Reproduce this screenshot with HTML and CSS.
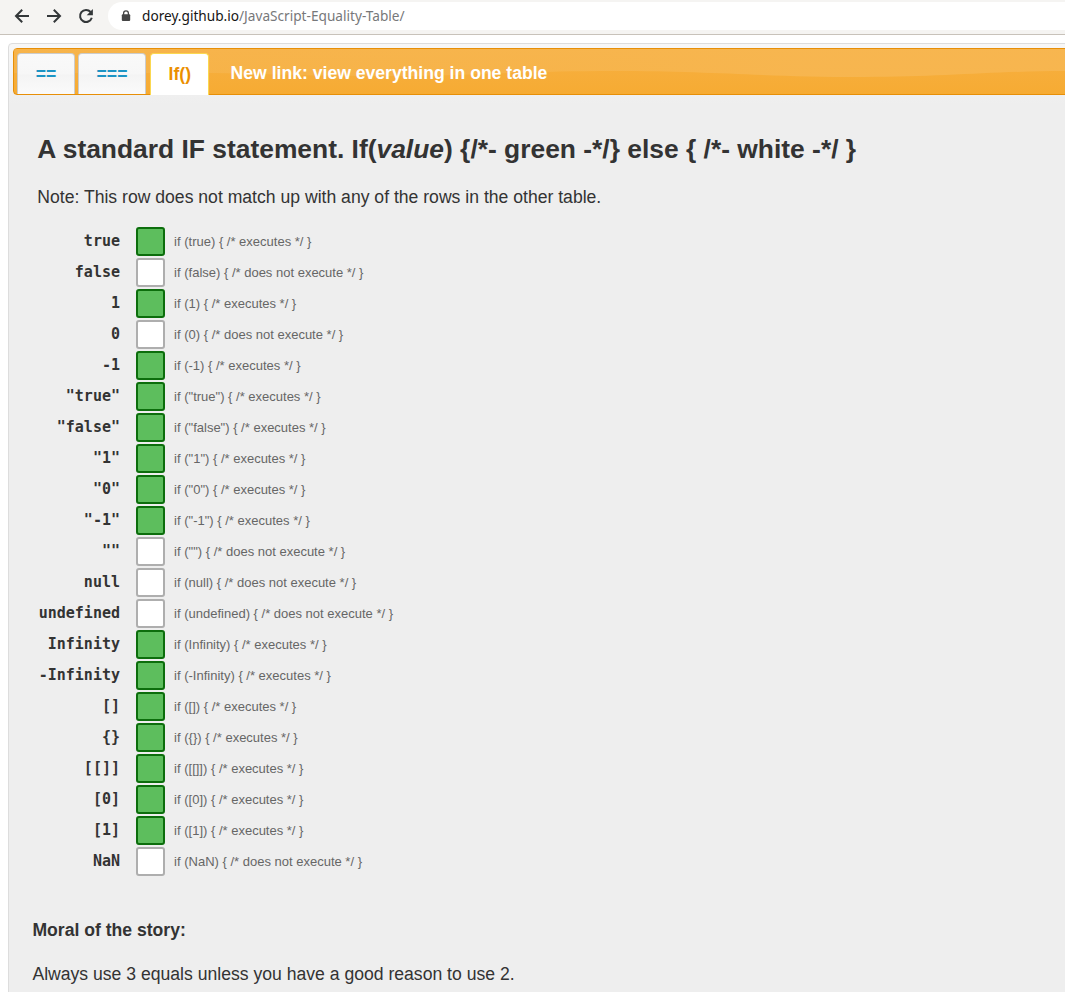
FILE: index.html
```html
<!DOCTYPE html>
<html lang="en">
<head>
<meta charset="utf-8">
<title>JavaScript Equality Table</title>
<link rel="stylesheet" href="styles.css">
</head>
<body>
<header class="browser">
  <svg class="nav" viewBox="0 0 16 16"><path d="M15 8H2.4M8.2 1.8L2 8l6.2 6.2"/></svg>
  <svg class="nav" viewBox="0 0 16 16"><path d="M1 8h12.8M7.8 1.8L14 8l-6.2 6.2"/></svg>
  <svg class="nav" viewBox="0 0 16 16"><path d="M12.6 4A6 6 0 1 0 13.8 9.8"/><path class="solid" d="M14.9 1v6.2H8.7z"/></svg>
  <div class="address">
    <svg class="lock" viewBox="0 0 10 12"><path class="shackle" d="M2.6 5V3.2a2.3 2.3 0 0 1 4.8 0V5"/><rect x="0.8" y="4.2" width="8.4" height="6.9" rx="1"/></svg>
    <span class="url"><b>dorey.github.io</b>/JavaScript-Equality-Table/</span>
  </div>
</header>
<main class="panel">
  <nav class="tabs">
    <svg class="wave" viewBox="0 0 1052 45" preserveAspectRatio="none"><defs><linearGradient id="sheen"><stop offset="0" stop-color="#f7b650" stop-opacity=".6"/><stop offset=".5" stop-color="#f7b650" stop-opacity=".75"/><stop offset=".75" stop-color="#f7b650" stop-opacity=".95"/></linearGradient></defs><path fill="url(#sheen)" d="M0 0H1052V22C980 22 930 28 850 28C750 28 700 22 600 22C500 22 430 28 350 27C280 27 240 24 186 24H0z"/></svg>
    <a class="tab eq2">==</a>
    <a class="tab eq3">===</a>
    <a class="tab active">If()</a>
    <a class="link">New link: view everything in one table</a>
  </nav>
  <section class="content">
    <h2>A standard IF statement. If(<em>value</em>) {/*- green -*/} else { /*- white -*/ }</h2>
    <p class="note">Note: This row does not match up with any of the rows in the other table.</p>
    <div class="rows" id="rows"></div>
  </section>
  <footer class="moral">
    <h4>Moral of the story:</h4>
    <p>Always use 3 equals unless you have a good reason to use 2.</p>
  </footer>
</main>
<script src="rows.js"></script>
</body>
</html>
```

FILE: styles.css
```css
* { box-sizing: border-box; }
body { margin: 0; background: #fff; color: #333; font: 17.6px/22px "Liberation Sans", Arial, sans-serif; height: 992px; overflow: hidden; }
.browser { height: 35px; background: #f5f4f2; border-bottom: 1px solid #c8c2ba; display: flex; padding: 2px 0 0 14px; }
.nav { width: 16px; height: 16px; margin: 6px 16px 0 0; flex: none; fill: none; stroke: #333739; stroke-width: 2; }
.nav .solid { fill: #333739; stroke: none; }
.address { flex: 1; height: 28px; margin-left: -2px; padding-left: 13px; background: #fff; border-radius: 14px 0 0 14px; display: flex; align-items: center; }
.lock { width: 10px; height: 12px; fill: #454545; margin-right: 11px; }
.shackle { fill: none; stroke: #454545; stroke-width: 1.3; }
.url { font: 13.65px/28px "Noto Sans", sans-serif; color: #77787a; white-space: nowrap; }
.url b { font-weight: 400; color: #151515; }
.panel { margin: 8px 0 0 8px; width: 1100px; height: 970px; padding: 4px; border: 1px solid #ddd; border-radius: 4px 0 0 0; background: linear-gradient(#f7f7f7, #eee 60px); }
.tabs { height: 47px; position: relative; display: flex; align-items: flex-start; padding: 4px 0 0 3px; border: 1px solid #e78f08; border-radius: 4px 0 0 4px; background: linear-gradient(#f7b042, #f6ab33); }
.wave { position: absolute; left: 0; top: 0; width: 1052px; height: 45px; }
.tab { position: relative; height: 41px; margin-right: 3px; border: 1px solid #ccc; border-bottom: 0; border-radius: 4px 4px 0 0; background: linear-gradient(#f9f9f9, #f7f7f7 50%, #f4f4f4 52%, #fafafa); color: #1c94c4; font-weight: 700; line-height: 40px; text-align: center; }
.eq2 { width: 58px; }
.eq3 { width: 68px; margin-right: 4px; }
.active { width: 59px; height: 42px; margin-right: 21.6px; padding-left: 0.6px; background: #fff; border-color: #fbd850; color: #eb8f00; }
.link { position: relative; color: #fff; font-weight: 700; line-height: 40px; }
.content { padding: 37px 0 0 24.3px; }
h2 { font-size: 26.4px; line-height: 34px; margin: 0; white-space: nowrap; }
.note { margin: 20px 0 19px; }
.rows { display: grid; grid-auto-rows: 29px; row-gap: 2px; }
.row { display: grid; grid-template-columns: 82.7px 29px 1fr; column-gap: 16px; }
.label { font: 700 15px/29px "DejaVu Sans Mono", monospace; text-align: right; }
.box { border: 2px solid #aeaeae; border-radius: 3px; background: #fff; }
.box.yes { border-color: #0c6e0c; background: #5dbe5d; }
.code { font-size: 13px; line-height: 29px; color: #666; margin-left: -6.9px; }
.moral { padding: 43px 0 0 19.4px; }
.moral h4 { margin: 0 0 22px; font-size: 17.6px; }
.moral p { margin: 0; }
```

FILE: rows.js
```js
const values = ['true', 'false', '1', '0', '-1', '"true"', '"false"', '"1"', '"0"', '"-1"', '""', 'null', 'undefined', 'Infinity', '-Infinity', '[]', '{}', '[[]]', '[0]', '[1]', 'NaN'];
const falsy = new Set(['false', '0', '""', 'null', 'undefined', 'NaN']);
const make = (cls, text) => {
  const el = document.createElement('div');
  el.className = cls;
  el.textContent = text;
  return el;
};
for (const value of values) {
  const no = falsy.has(value);
  const row = make('row', '');
  row.append(
    make('label', value),
    make(no ? 'box' : 'box yes', ''),
    make('code', `if (${value}) { /* ${no ? 'does not execute' : 'executes'} */ }`)
  );
  document.getElementById('rows').append(row);
}
```
